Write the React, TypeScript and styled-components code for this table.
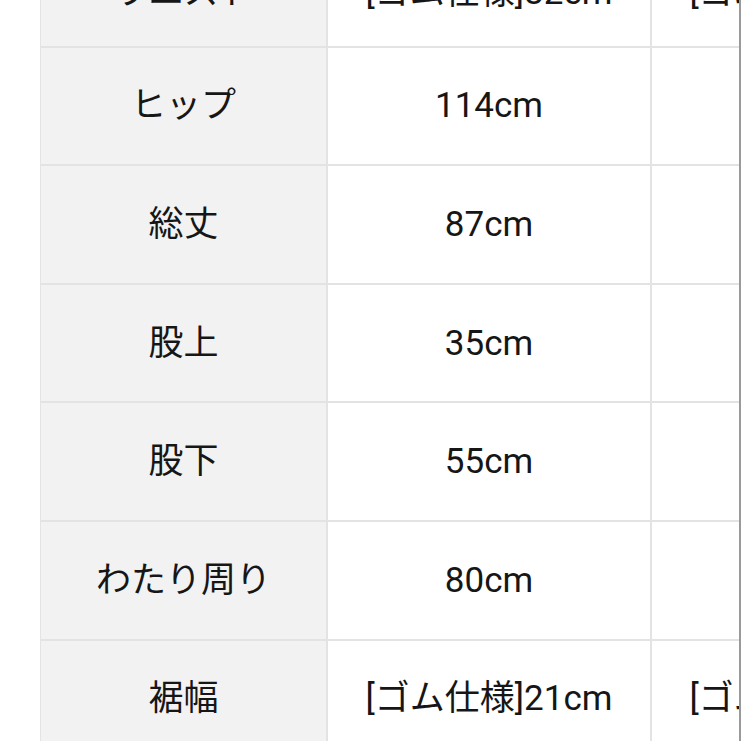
import React from 'react'
import styled, { createGlobalStyle } from 'styled-components'

const GlobalStyle = createGlobalStyle`
  html, body {
    margin: 0;
    padding: 0;
    background: #ffffff;
    overflow: hidden;
  }
  body {
    font-family: Roboto, "Noto Sans CJK JP", "Noto Sans", sans-serif;
    color: #161616;
  }
`;

const Screen = styled.div`
  width: 739px;
  height: 741px;
  overflow: hidden;
  border-right: 2px solid #9a9a9a;
  background: #ffffff;
`;

const Table = styled.div`
  margin-top: -71px;
  margin-left: 40px;
  width: 940px;
  border-left: 1px solid #e4e4e4;
`;

const Row = styled.div<{ $shift?: number }>`
  display: grid;
  grid-template-columns: 287px 324px 324px;
  height: 118.6px;
  box-sizing: border-box;
  padding-top: ${(p) => p.$shift ?? 0}px;
  border-bottom: 2px solid #e3e3e3;
  background: linear-gradient(to right, #f2f2f2 287px, #ffffff 287px);
`;

const Cell = styled.div<{ $label?: boolean }>`
  display: flex;
  align-items: center;
  justify-content: center;
  white-space: nowrap;
  box-sizing: border-box;
  border-right: 2px solid #e3e3e3;
  background: ${(p) => (p.$label ? '#f2f2f2' : '#ffffff')};
  font-size: 35px;
  line-height: 1;
`;

const rows: [string, string, string][] = [
  ['ウエスト', '[ゴム仕様]82cm', '[ゴム仕様]86cm'],
  ['ヒップ', '114cm', '118cm'],
  ['総丈', '87cm', '88cm'],
  ['股上', '35cm', '36cm'],
  ['股下', '55cm', '55cm'],
  ['わたり周り', '80cm', '82cm'],
  ['裾幅', '[ゴム仕様]21cm', '[ゴム仕様]22cm'],
];

export default function App() {
  return (
    <>
      <GlobalStyle />
      <Screen>
        <Table>
          {rows.map(([label, a, b], i) => (
            <Row key={label} $shift={i === 0 ? 10 : 0}>
              <Cell $label>{label}</Cell>
              <Cell>{a}</Cell>
              <Cell>{b}</Cell>
            </Row>
          ))}
        </Table>
      </Screen>
    </>
  )
}
